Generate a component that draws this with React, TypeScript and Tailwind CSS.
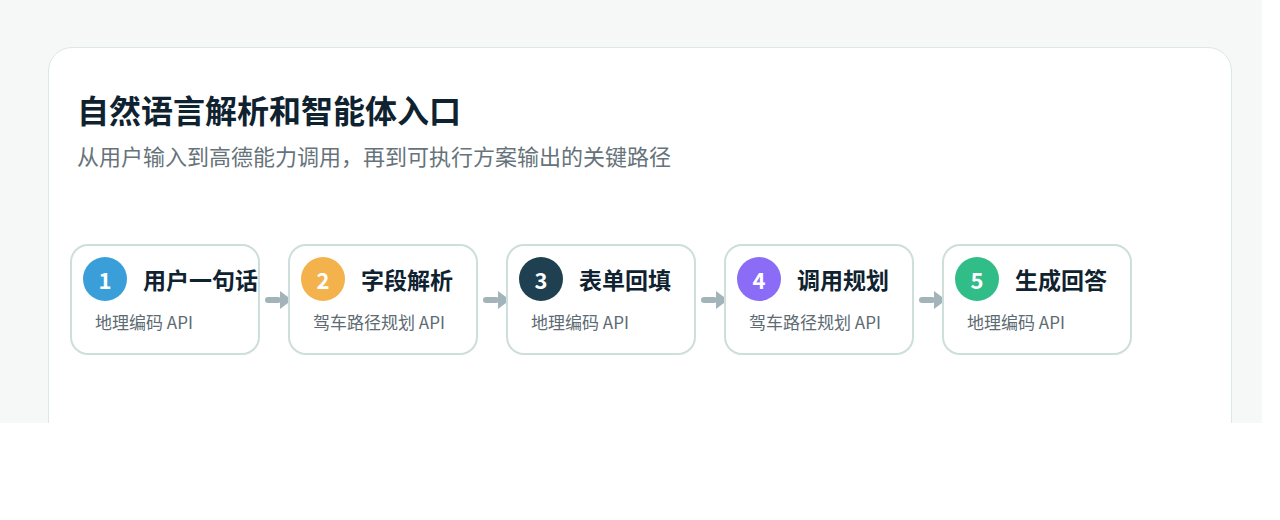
import React from 'react';

type Step = {
    no: number;
    title: string;
    api: string;
    color: string;
};

const steps: Step[] = [
    { no: 1, title: '用户一句话', api: '地理编码 API', color: 'bg-[#3a9fd8]' },
    { no: 2, title: '字段解析', api: '驾车路径规划 API', color: 'bg-[#f3b24c]' },
    { no: 3, title: '表单回填', api: '地理编码 API', color: 'bg-[#1e4050]' },
    { no: 4, title: '调用规划', api: '驾车路径规划 API', color: 'bg-[#8a6cf7]' },
    { no: 5, title: '生成回答', api: '地理编码 API', color: 'bg-[#31bd88]' },
];

function Arrow() {
    return (
        <div className="w-[28px] h-[20px] shrink-0">
            <svg width="28" height="20" viewBox="0 0 28 20" overflow="visible">
                <rect x="5" y="7" width="16" height="6" rx="3" fill="#a2b4b9" />
                <polygon points="20,1 32,10 20,19" fill="#a2b4b9" />
            </svg>
        </div>
    );
}

function StepCard({ step }: { step: Step }) {
    return (
        <div className="relative z-10 w-[190px] h-[111px] shrink-0 rounded-[18px] border-2 border-[#cddedb] bg-white p-[11px]">
            <div className="flex items-center gap-4">
                <div className={`w-[44px] h-[44px] shrink-0 rounded-full ${step.color} flex items-center justify-center text-white text-[22px] font-bold`}>
                    {step.no}
                </div>
                <span className="text-[23px] font-bold text-[#0f2230] whitespace-nowrap leading-[30px]">{step.title}</span>
            </div>
            <p className="mt-2 pl-3 text-[17px] leading-[26px] text-[#5d6b73] whitespace-nowrap">{step.api}</p>
        </div>
    );
}

export default function App() {
    return (
        <div
            className="w-[1262px] h-[423px] overflow-hidden bg-[#f5f8f7] pl-12 pt-[47px]"
            style={{ fontFamily: '"Noto Sans CJK SC", "Noto Sans", sans-serif' }}
        >
            <div className="w-[1184px] h-[520px] rounded-[24px] border border-[#dce8e5] bg-white px-[28px] pt-[41px]">
                <h1 className="text-[32px] leading-[40px] font-bold text-[#0f2230]">自然语言解析和智能体入口</h1>
                <p className="mt-[10px] text-[22px] leading-[33px] text-[#66737a]">
                    从用户输入到高德能力调用，再到可执行方案输出的关键路径
                </p>

                <div className="mt-[72px] -ml-[7px] flex items-center">
                    {steps.map((step, i) => (
                        <React.Fragment key={step.no}>
                            {i > 0 && <Arrow />}
                            <StepCard step={step} />
                        </React.Fragment>
                    ))}
                </div>
            </div>
        </div>
    );
}
